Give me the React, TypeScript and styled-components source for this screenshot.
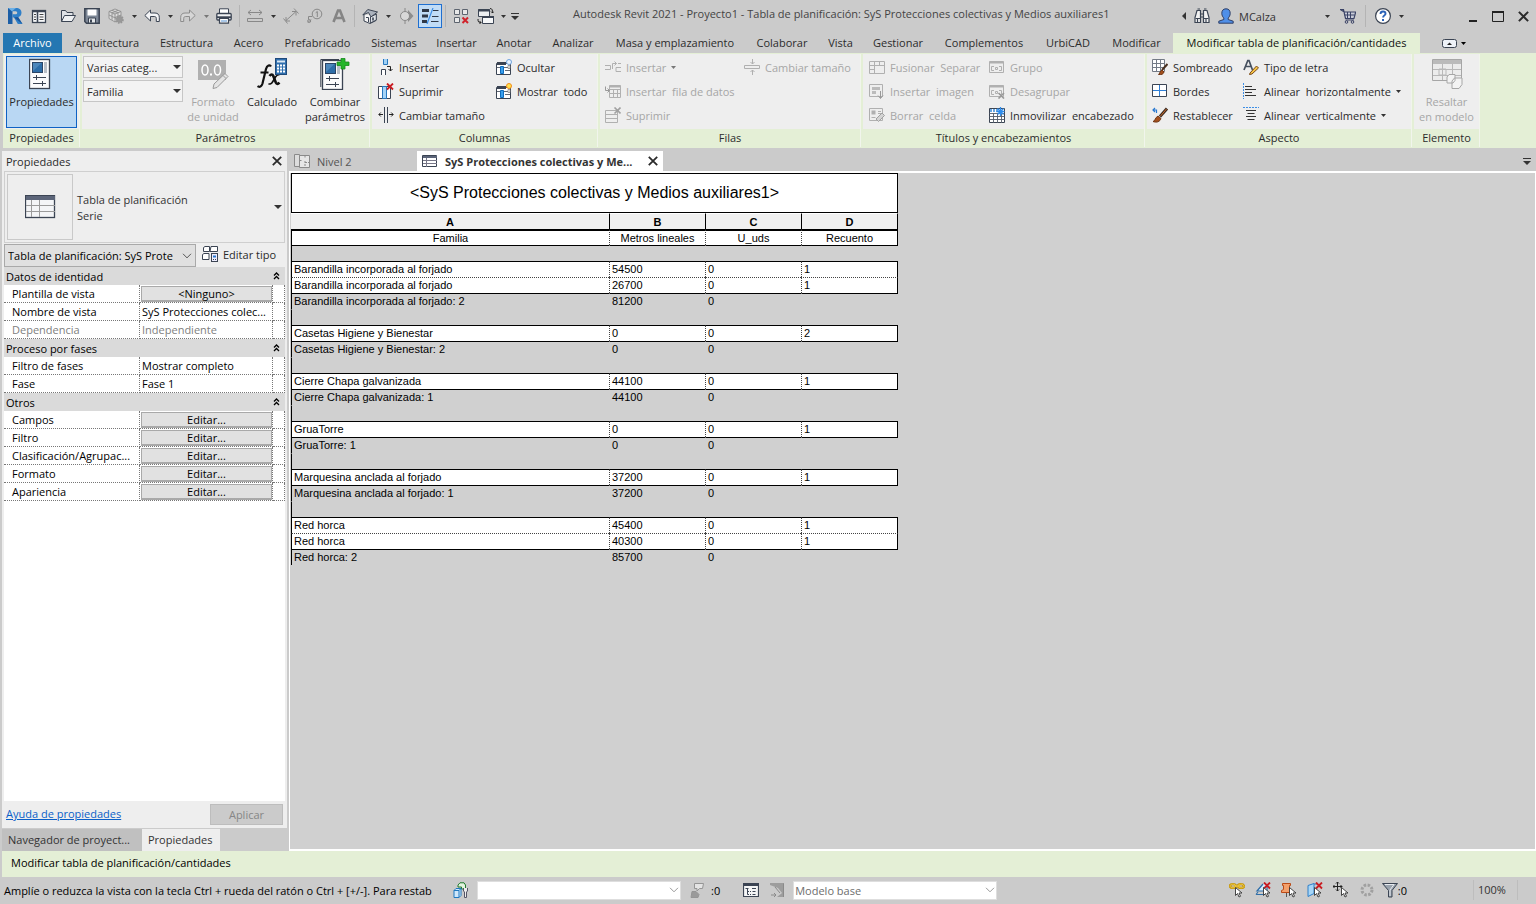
import React from 'react';
import styled, { createGlobalStyle, css } from 'styled-components';

const UI = '"Open Sans", "Noto Sans", sans-serif';
const SHEET = '"Liberation Sans", Arial, sans-serif';
const C = {
  chrome: '#cbcbcb',
  panel: '#eeeeee',
  green: '#e4efd6',
  text: '#2b2b2b',
  off: '#a6a6a6',
  ink: '#3b4453',
  blue: '#2577b2',
};

const GlobalStyle = createGlobalStyle`
  *, *::before, *::after { box-sizing: border-box; }
  body { margin: 0; background: ${C.chrome}; font-family: ${UI}; font-size: 11px; line-height: 15px; color: ${C.text}; }
  button, select, input { font: inherit; color: inherit; margin: 0; padding: 0; border: 0; background: none; border-radius: 0; }
  table { border-collapse: separate; border-spacing: 0; table-layout: fixed; }
  th { font-weight: inherit; text-align: inherit; }
  svg { display: block; flex: none; }
`;

/* ---------- icons ---------- */

type IconProps = { children: React.ReactNode; size?: number; w?: number; h?: number };
const Icon = ({ children, size = 16, w, h }: IconProps) => (
  <svg width={w ?? size} height={h ?? size} viewBox={`0 0 ${w ?? size} ${h ?? size}`} fill="none" stroke={C.ink} aria-hidden="true">
    {children}
  </svg>
);

const Caret = ({ color = '#333', w = 5 }: { color?: string; w?: number }) => (
  <svg width={w} height={w > 6 ? 4 : 3} viewBox={w > 6 ? '0 0 8 4' : '0 0 5 3'} aria-hidden="true">
    <path d={w > 6 ? 'M0 0h8L4 4z' : 'M0 0h5L2.5 3z'} fill={color} />
  </svg>
);

const Chevron = ({ color = '#555' }: { color?: string }) => (
  <Icon w={10} h={6}><path d="M1 .8 5 4.800 9 .8" stroke={color} /></Icon>
);

const RevitLogo = () => (
  <Icon w={16} h={18}>
    <path d="M1 1h4.500v16H1z" fill="#1c5ea6" stroke="none" />
    <path d="M4 1h5c3.500 0 5.500 1.800 5.500 4.700 0 2.300-1.300 3.900-3.500 4.500L15.500 17h-4.700L7 10.500H5.500V7.200h2.700c1.300 0 2-.5 2-1.500s-.7-1.500-2-1.500H4z" fill="#2f7fc8" stroke="none" />
    <path d="M1 1h8L5 4.300z" fill="#6fb1e6" stroke="none" />
    <path d="m7 10.500 4.200-.4L15.500 17z" fill="#1a559b" stroke="none" />
  </Icon>
);
const PropsSmall = () => (
  <Icon size={16}>
    <rect x="1.500" y="2.500" width="13" height="12" fill="#f7f8fa" strokeWidth="1.300" />
    <path d="M1 3.500h14M6.500 4v10" strokeWidth="1.600" />
    <path d="M3 6.500h2M3 9h2M3 11.500h2M8.500 6.500h4M8.500 9h4M8.500 11.500h4" stroke="#444" />
  </Icon>
);
const OpenIcon = () => (
  <Icon size={16}>
    <path d="M1.500 13.500v-11h4l1.500 2h6v3" fill="#dfe2e6" />
    <path d="m1.500 13.500 3-6h11l-3.500 6z" fill="#eef0f2" />
  </Icon>
);
const SaveIcon = () => (
  <Icon size={16}>
    <path d="M.8.8h14.400v14.400H2.500L.8 13.500z" fill="#7d8796" strokeWidth="1.500" />
    <path d="M3.500 1.500h9v6h-9z" fill="#fff" stroke="none" />
    <path d="M4.500 10h7v5h-7z" fill="#e4e7ea" stroke={C.ink} />
    <path d="M6 11.500h2v3H6z" fill={C.ink} stroke="none" />
  </Icon>
);
const CubeGear = () => (
  <Icon size={16}>
    <path d="M7 1 13 3.500v7L7 14 1 10.500v-7z M1 3.500 7 6l6-2.500M7 6v8M4 2.300l6 2.500v7M10 2.300 4 4.800v7M1 7l6 2.800L13 7" stroke="#909090" fill="#dcdcdc" strokeWidth=".9" />
    <circle cx="11.500" cy="11.500" r="3.300" fill="#999" stroke="#959595" strokeDasharray="1.500 1" strokeWidth="2" />
  </Icon>
);
const Undo = ({ color = C.ink, fill = '#f4f5f7', flip = false }: { color?: string; fill?: string; flip?: boolean }) => (
  <Icon size={16}>
    <path transform={flip ? 'translate(16 0) scale(-1 1)' : undefined} d="M.8 7.500 6.500 2v3h4.500c3 0 4.300 1.900 4.300 4.300v4.200h-3v-3c0-1.400-.7-2-2-2H6.500V13z" fill={fill} stroke={color} strokeLinejoin="round" />
  </Icon>
);
const Printer = () => (
  <Icon size={16}>
    <path d="M3.500 6V.8h9V6" fill="#fff" />
    <rect x=".8" y="5.500" width="14.400" height="6.500" rx="1" fill="#f3f4f5" strokeWidth="1.300" />
    <path d="M1 9.200h14" strokeWidth="1.800" />
    <path d="M3.500 10.500h9v4.700h-9z" fill="#fff" strokeWidth="1.200" />
    <path d="M5 13h6" stroke="#5590d0" />
  </Icon>
);
const Measure = () => (
  <Icon size={16}>
    <path d="M1 4.500h14M4 2 1 4.500 4 7M12 2l3 2.500L12 7M.5 10.500h15v3H.5z" stroke="#888" />
  </Icon>
);
const Dim = () => (
  <Icon size={16}><path d="M3 12.500 12.500 4M3 9v4h4M9 3.500h4v4M.5 10.500l4 5M11 .5l4.500 5" stroke="#8a8a8a" /></Icon>
);
const TagOne = () => (
  <Icon size={16}>
    <circle cx="10" cy="6" r="4.800" stroke="#888" />
    <path d="M8.700 4.800 10.300 3.500V9M5 8.500H1.500v3M1 14.500l3-3" stroke="#888" /><circle cx="2.200" cy="13" r="1.500" stroke="#888" />
  </Icon>
);
const LetterIcon = () => (
  <Icon size={14}><path d="M1.500 13 6 1.500h2L12.500 13M3.500 9h7" stroke="#858585" strokeWidth="2.600" /></Icon>
);
const House = () => (
  <Icon size={16}>
    <path d="M2 7v6l6 2.500 6-3V6" fill="#f5f5f5" /><path d="m.8 7 5-5.500L15.500 4 9 9 6.500 4.500z" fill="#aab2bd" strokeLinejoin="round" />
    <path d="m8.500 9-.2 6 6-3V6z" fill="#dde1e6" /><path d="M4 9.500h2.500V14" /><path d="M11 9.500v3" strokeWidth="1.600" />
  </Icon>
);
const Section = () => (
  <Icon size={16}>
    <path d="m10 2 5.500 6L10 14z" fill="#8d8d8d" stroke="none" /><circle cx="7" cy="8" r="4.500" fill="#d8d8d8" stroke="#888" /><path d="M7 0v3M7 13v3" stroke="#888" />
  </Icon>
);
const ThinLines = () => (
  <Icon w={18} h={16}>
    <path d="M1 2.500h7M1 8h6M1 13.500h5" stroke="#303846" strokeWidth="3" />
    <path d="M12 2.500h5.500M11 8.500h6.500M10 13.500h7.500" stroke="#303846" /><path d="M12 0 6 16" stroke="#3c8ee6" strokeWidth="1.200" />
  </Icon>
);
const CloseHidden = () => (
  <Icon size={16}>
    <path d="M1.500 1.500h5v5h-5zM1.500 9.500h5v5h-5zM9.500 1.500h5v5h-5z" fill="#e8e8e8" stroke="#5d646f" />
    <path d="m9.500 9.500 5.500 5.500m0-5.500L9.500 15" stroke="#d0232b" strokeWidth="2" />
  </Icon>
);
const SwitchWin = () => (
  <Icon size={17}>
    <path d="M1.500 1.500h11v7h-11z" fill="#eceef0" /><path d="M1 2.500h12" strokeWidth="2" />
    <path d="M5.500 8.500h11v7h-11z" fill="#f6f7f8" /><path d="M5 9h12" strokeWidth="2" />
    <path d="M13 .5c2.500 0 2.500 2 2.500 4.500m-1.500-1.500L15.500 5 17 3.500M1 11c0 3 .5 3.500 3 3.500M2.500 13 4 14.500 2.500 16" stroke="#222" />
  </Icon>
);
const Customize = () => (
  <Icon w={8} h={7}><path d="M0 .5h8" stroke="#333" /><path d="M0 3h8L4 7z" fill="#333" stroke="none" /></Icon>
);
const Binoculars = () => (
  <Icon size={16}>
    <path d="M3 2.500h3.500V14.500h-5.500v-5zM9.500 2.500H13l2 7v5H9.500z" fill="#f2f2f2" strokeWidth="1.200" />
    <path d="M3.500 1h2.500M10 1h2.500M6.500 6h3M6.500 9h3M1.500 10.500h5M9.500 10.500h5M3.500 11v3M12 11v3" strokeWidth="1.200" />
  </Icon>
);
const UserIcon = () => (
  <Icon size={16}>
    <path d="M8 .8c3 0 4.200 2 4.200 4.500 0 2.300-1 3.700-2 4.700v1.500l5 1.700v2H.8v-2l5-1.700V10c-1-1-2-2.400-2-4.700C3.800 2.800 5 .8 8 .8z" fill="#4f8fe8" stroke="#2f3f66" />
  </Icon>
);
const Cart = () => (
  <Icon size={16}>
    <path d="M.5 1.500h3l2 9h8.500l1.700-6.500H4.200z" fill="#c8ccd8" stroke="#3b4366" strokeWidth="1.200" /><path d="M4.500 7h10M7.500 4v6M10.500 4v6M5.500 12h8.500" stroke="#3b4366" />
    <circle cx="6.500" cy="14" r="1.300" stroke="#3b4366" /><circle cx="12.500" cy="14" r="1.300" stroke="#3b4366" />
  </Icon>
);
const Help = () => (
  <Icon size={16}>
    <circle cx="8" cy="8" r="7.400" fill="#fff" strokeWidth="1.200" /><path d="M5.500 6c0-1.600 1-2.500 2.500-2.500s2.500.9 2.500 2.200c0 1.700-2.400 1.700-2.400 3.800" stroke="#2a62b8" strokeWidth="1.900" /><path d="M7 11h2v2H7z" fill="#2a62b8" stroke="none" />
  </Icon>
);

const PropsBody = ({ x = 0, y = 0 }: { x?: number; y?: number }) => (
  <g transform={`translate(${x} ${y})`}>
    <rect x=".5" y=".5" width="20" height="29" fill="#fbfbfc" strokeWidth="1.300" />
    <rect x="3.500" y="3.500" width="10" height="10" fill="#2d6da8" stroke="#2b4566" /><path d="M4 12 12.500 4H4z" fill="#4d87bb" stroke="none" />
    <path d="M15 3h3v11h-3z" fill="#b9bfc7" stroke="none" /><path d="M4 18.500h13M4 24.500h13M7.500 16v5M13.500 22v5" />
  </g>
);
const PropsBig = () => <Icon w={26} h={32}><PropsBody x={0} y={1} /></Icon>;
const Combine = () => (
  <Icon w={30} h={32}>
    <path d="M.8 29V1.500H19" fill="none" /><g><PropsBody x={2} y={2} /></g>
    <path d="M21 .500h4v3.500h4v3.500h-4V11h-4V7.500h-4V4h4z" fill="#25b52b" stroke="#168a1c" strokeWidth=".8" />
  </Icon>
);
const UnitFormat = () => (
  <Icon w={32} h={32}>
    <path d="M1 2h28v20H1z" fill="#b0b0b0" stroke="none" />
    <ellipse cx="8" cy="12" rx="3" ry="5" stroke="#fff" strokeWidth="1.500" /><path d="M13 15.500h2v2h-2z" fill="#fff" stroke="none" /><ellipse cx="20.500" cy="12" rx="3" ry="5" stroke="#fff" strokeWidth="1.500" />
    <path d="M17 26 28 15.500l3 3L20 29.500l-4 1z" fill="#e4e4e4" stroke="#9a9a9a" /><path d="m26 17.500 3 3" stroke="#9a9a9a" />
  </Icon>
);
const FormulaIcon = () => (
  <Icon w={32} h={32}>
    <path d="M15 8.500c-1-2-4-1.500-5 2.500L6.500 25.500c-.8 3-3 4-5 2.700M4.500 14.500h8" stroke="#111" strokeWidth="2.200" />
    <path d="M13.500 18c1.500-2 3-2 3.800 0l2.500 6.500c.8 1.800 2.200 1.700 3.700.2" stroke="#111" strokeWidth="2.600" />
    <path d="M23.500 17c-1.500-.7-3 .5-4 2l-3 5c-1 1.800-2.500 2.500-4 1.600" stroke="#111" strokeWidth="1.600" />
    <rect x="19.500" y=".5" width="11" height="16" fill="#2f6fae" stroke="#1f4a7a" />
    <path d="M21 2.500h8v2h-8z" fill="#dbe9f5" stroke="none" />
    <path d="M21 7.500h8M21 10.500h8M21 13.500h8" stroke="#fff" strokeWidth="2" strokeDasharray="2 1" />
  </Icon>
);
const Highlight = () => (
  <Icon w={32} h={32}>
    <path d="M1.500 1.500h29v21h-29z" fill="#ececec" stroke="#a6a6a6" /><path d="M2 2h28v4H2z" fill="#bbb" stroke="none" />
    <path d="M2 11.500h28M2 17.500h28M11.500 6v16M21.500 6v16M8 11h7v6H8z" stroke="#b8b8b8" />
    <path d="m16 19 2-2.500h6v6L22 25h-6zM21 23l2.500-3H31v6.500L28 30.500h-7z" fill="#f3f3f3" stroke="#a6a6a6" />
  </Icon>
);

const InsertCol = () => (
  <Icon size={16}>
    <path d="M5.500 0v5.500h4V0" fill="#9fd0f5" stroke="#2878be" /><path d="M3.500 16v-5.500h4V16" fill="#fff" /><path d="M9 7.500h3.500V12M10.500 10 12.500 12 14.500 10" stroke="#222" />
  </Icon>
);
const RedX = ({ x = 9, y = 0 }: { x?: number; y?: number }) => <path d={`M${x} ${y + .5}l6 6m0-6l-6 6`} stroke="#c91c22" strokeWidth="1.800" />;
const DeleteCol = () => (
  <Icon size={16}>
    <path d="M.5 3.500h12v12H.5z" fill="#fff" /><path d="M4.500 3.500h4v12h-4z" fill="#a5d4f7" stroke="#2878be" /><RedX />
  </Icon>
);
const ResizeCol = () => (
  <Icon size={16}><path d="M6.500 0v16M9.500 0v16" /><path d="M1 7.500h4M11 7.500h4M2.800 5.500.8 7.500l2 2M13.200 5.500l2 2-2 2" stroke="#222" /></Icon>
);
const HideCol = ({ on = false }: { on?: boolean }) => (
  <Icon size={16}>
    <path d="M.5 4.500h14v11H.5z" fill="#fff" /><path d="M1 4.500h9" strokeWidth="3" /><path d="M1 8.500h14M9 11.500h6" strokeWidth=".8" />
    <path d="M4.500 7.500h3v7h-3z" fill="#3aa0ee" stroke="#0f6cbd" />
    <path d="M12 6.500h2v3h-2z" fill="#fff" stroke="#888" strokeWidth=".8" /><circle cx="13" cy="3" r="2.500" fill={on ? '#ffe34d' : '#eaf4ff'} stroke={on ? '#f08a1d' : '#6fa3dd'} />
  </Icon>
);
const G = '#b0b0b0';
const InsertRow = () => (
  <Icon size={16}><path d="M0 6.500h5.500v4H0M16 8.500h-5v4h5M16 4.500h-3M7.500 10V4.500h4M9.500 2.500l2 2-2 2" stroke={G} /></Icon>
);
const InsertData = () => (
  <Icon size={16}><path d="M4.500 2.500h11v12h-11zM4.500 6.500h11M4.500 10.500h11M8.500 6v8M12.500 6v8" stroke={G} /><path d="M4.500 3.500h11" stroke={G} strokeWidth="2" /><path d="M.5 3.500v4h4M2.500 5.500l2 2-2 2" stroke="#999" /></Icon>
);
const DeleteRow = () => (
  <Icon size={16}><path d="M.5 3.500h12v12H.5zM.5 7.500h12M.5 11.500h12" stroke={G} /><path d="m9.500.5 6 6m0-6-6 6" stroke="#a0a0a0" strokeWidth="1.600" /></Icon>
);
const ResizeRow = () => (
  <Icon size={16}><path d="M.5 6.500h15v3H.500z M8.500 0v5M8.500 11v5M6.500 3 8.500 5l2-2M6.500 13l2-2 2 2" stroke={G} /></Icon>
);
const Merge = () => (
  <Icon size={16}><path d="M.5 2.500h15v12H.5zM.5 6.500h15M5.500 2.500v12M10.500 2.500v4M.5 10.500h5" stroke={G} /></Icon>
);
const InsertImg = () => (
  <Icon size={16}><path d="M.5 1.500h13v12H.5z" stroke={G} /><path d="M3 4h8v3H3zM3 8h4v3H3z" fill="#bbb" stroke="none" /><path d="M11.500 8v7M9 12.500l2.500 3 2.500-3" stroke="#999" /></Icon>
);
const ClearCell = () => (
  <Icon size={16}><path d="M.5 1.500h13v12H.5z" stroke={G} /><path d="M2.500 3.500h4v4h-4z" fill={G} stroke="none" /><path d="M9 4.500h3M9 6.500h3M2.500 10.500h4" stroke={G} /><path d="m7 12 6-6 2.500 2.500-6 6z" fill="#d4d4d4" stroke="#a0a0a0" /></Icon>
);
const GroupIcon = ({ x = false }: { x?: boolean }) => (
  <Icon size={16}><path d="M.5 2.500h14v11H.5z" stroke={G} /><path d="M.5 3.500h14" stroke={G} strokeWidth="2" /><path d="M5 7.500H2.500v4H5M10 7.500h2.500v4H10M6.500 8.500h2v2h-2z" stroke={G} />{x && <path d="m9.500 10 5.500 5.500m0-5.500-5.500 5.500" stroke="#999" strokeWidth="1.600" />}</Icon>
);
const Freeze = () => (
  <Icon size={16}>
    <path d="M.5 1.500h15v14H.5z" fill="#fff" /><path d="M1 3.500h8" stroke="#6ba8e2" strokeWidth="3" strokeDasharray="2 1" /><path d="M.5 6.500h15M.5 9.500h15M.5 12.500h15M4.500 6v10M8.500 6v10M12.500 6v10" stroke="#555e6b" strokeWidth=".9" />
    <path d="M11.500 0v9M7.500 4.500h8M8.500 1.500l6 6m0-6-6 6" stroke="#2f8ceb" strokeWidth="1.300" />
  </Icon>
);
const Brush = () => (
  <g><path d="M10 11 15.500 5" stroke="#4a3020" strokeWidth="2" /><path d="M6.500 15.500c1 0 1-3 3.500-4.500l2 2c-.5 2-2.500 3-5.500 2.500z" fill="#a4501c" stroke="#6d3413" /></g>
);
const Shading = () => (
  <Icon size={16}><path d="M.5.5h12v12H.5zM.5 4.500h12M.5 8.500h12M4.500.5v12M8.500.5v12" fill="#fff" stroke="#747b86" /><Brush /></Icon>
);
const Borders = () => (
  <Icon size={16}><path d="M.5 1.500h14v12H.5z" fill="#fff" /><path d="M7.500 2v11M1 7.500h13" stroke="#2f7fd6" /></Icon>
);
const Reset = () => (
  <Icon size={16}>
    <path d="M8 9.500 15 1.500" stroke="#3b2a20" strokeWidth="3" /><path d="M8.500 9 14.500 2" stroke="#c96a2b" />
    <path d="M1 14.500c2 0 2-4 5-5.500l3 2.500c-1 3-4 4.500-8 3z" fill="#a4501c" stroke="#6d3413" /><path d="M1 3h3.500v3M3 1 1 3l2 2" stroke="#2878d0" strokeWidth="1.200" />
  </Icon>
);
const FontIcon = () => (
  <Icon size={16}><path d="M1 11 4.800 1.500H6L9.500 11M2.500 7.500h5.500" stroke="#46505f" strokeWidth="1.700" /><path d="m7 14 6.500-7 2 2L9 15l-2.500.5z" fill="#f6c445" stroke="#7a4a1a" /></Icon>
);
const AlignH = () => (
  <Icon size={16}><path d="M.5 0v16" stroke="#3c8ee6" strokeDasharray="2 1" /><path d="M2 3.500h7M2 6.500h11M2 9.500h7M2 12.500h11" stroke="#333" /></Icon>
);
const AlignV = () => (
  <Icon size={16}><path d="M0 .5h16" stroke="#3c8ee6" strokeDasharray="2 1" /><path d="M3 3.500h10M4.500 6.500h7M3 9.500h10M4.500 12.500h7" stroke="#333" /></Icon>
);
const TableBig = () => (
  <Icon w={31} h={24}><rect x=".5" y=".5" width="29" height="22" fill="#f4f5f7" strokeWidth="1.300" /><path d="M1 3h29" stroke="#5c6579" strokeWidth="4" /><path d="M1 10.500h29M1 16.500h29M6.500 5v17M14.500 5v17" stroke="#9b9b9b" /></Icon>
);
const TableTab = () => (
  <Icon w={16} h={13}><path d="M.5.5h14v11H.5z" fill="#fff" /><path d="M1 2h14" strokeWidth="2" stroke="#5c6579" /><path d="M1 5.500h14M1 8.500h14M4.500 3v9" stroke="#778" /></Icon>
);
const PlanTab = () => (
  <Icon w={16} h={14}><path d="M5.500 2V.500H.5v12h5" fill="#ddd" stroke="#8a8a8a" /><path d="M5.500 1.500h10v12h-10z" fill="#e6e6e6" stroke="#8a8a8a" /><path d="M5.500 6.500h3M11 1.500v3M11 7v6.500M11 8.500h4" stroke="#8a8a8a" strokeDasharray="2 1" /></Icon>
);
const EditType = () => (
  <Icon size={16}><path d="M1.500 1.500 3 .5h4.500v5h-6zM9 .5h6.500v5H8zM.5 8.500 2 7.500h5v6H.500z" fill="#fff" /><rect x="9.500" y="7.500" width="6" height="8" fill="#eef" /><path d="M11 9.500h3v2h-3z" fill="#2878d0" stroke="none" /><path d="M11 13.500h3" strokeDasharray="1 1" /></Icon>
);
const DoubleUp = () => (
  <Icon w={7} h={8}><path d="m1 3.500 2.500-2.500L6 3.500M1 7l2.500-2.500L6 7" stroke="#000" strokeWidth="1.300" /></Icon>
);
const Cross = ({ s = 10 }: { s?: number }) => (
  <svg width={s} height={s} viewBox="0 0 10 10" stroke="#2b2b2b" strokeWidth="1.800" aria-hidden="true"><path d="m.8.8 8.400 8.400m0-8.400L.8 9.200" /></svg>
);
const Pointer = ({ x = 7, y = 5 }: { x?: number; y?: number }) => <path transform={`translate(${x} ${y})`} d="M.5.5v8l2-2 1.500 3.500 1.500-.7L4 6h3z" fill="#fff" stroke="#333" strokeWidth=".9" />;
const Worksets = () => (
  <Icon size={16}><path d="M5 3 7 .8h4L12.500 3v4h-4v-2H5z" fill="#e2f3df" stroke="#1f7a2d" /><path d="M1 8.500 3 6.500h5v7L6 15.500H1z" fill="#cfe8fb" stroke="#1f78c0" /><path d="M1 8.500h5v7M6 8.500l2-2" stroke="#1f78c0" /><path d="M10.500 6v3l1 1v5.500h2V10l1-1V6" fill="#eee" stroke="#556" /></Icon>
);
const Requests = () => (
  <Icon size={16}><path d="M4.500 1.500h9l-1 5h-3L7 9V6.500H4.500z" fill="#e4e4e4" stroke="#959595" /><path d="M2 9.500h4l3 3-1 3H1z" fill="#9a9a9a" stroke="#959595" /></Icon>
);
const OptionsIcon = () => (
  <Icon size={16}><path d="M.5 1.500h15v13H.5z" fill="#f4f5f6" strokeWidth="1.200" /><path d="M1 3h14" strokeWidth="2" /><path d="M2.500 6.500h3M9 6.500h4M7 9.500h1M9.500 9.500h3M7 12.500h1M9.500 12.500h3M4.500 7v5.500h1.500M4.500 9.500H6" /></Icon>
);
const AddSet = () => (
  <Icon size={16}><path d="M1 1h14v14H8l5-4-4-5-8-3z" fill="#9d9d9d" stroke="none" /><path d="M2 13h5M5 11l2 2-2 2M14.500 15V1.500M6 5l5 6" stroke="#8a8a8a" /></Icon>
);
const SelLinks = () => <Icon size={16}><path d="M1 4C1 1.500 6.500 1.500 7 4s-6 2.500-6 0zM9 4c0-2.500 5.500-2.500 6 0s-6 2.500-6 0z" stroke="#c08f00" strokeWidth="2.400" /><path d="M1 4C1 1.500 6.500 1.500 7 4s-6 2.500-6 0zM9 4c0-2.500 5.500-2.500 6 0s-6 2.500-6 0zM5 4h6" stroke="#f3cd46" /><Pointer x={6} /></Icon>;
const SelUnder = () => <Icon size={16}><path d="M8 2 2 9h10V2" fill="#d8eafa" stroke="#2f6ea8" strokeWidth="1.200" /><path d="M1 12.500h9M3 10l-2 2.500" stroke="#2f6ea8" strokeWidth="1.200" /><RedX /><Pointer x={8} /></Icon>;
const SelPinned = () => <Icon size={16}><path d="M1.500 1.500h8v2h-1v4l2 1v2h-10v-2l2-1v-4h-1z" fill="#f3a06c" stroke="#bb4a17" /><path d="M5.500 11v4" stroke="#555" /><Pointer x={8} /></Icon>;
const SelFace = () => <Icon size={16}><path d="m1 3.500 6-2v10l-6 3z" fill="#a7d6f7" stroke="#2f7fc8" /><path d="M7 2h3" stroke="#2f7fc8" /><RedX /><Pointer x={7} /></Icon>;
const DragSel = () => <Icon size={16}><path d="M4.500 0v9M0 4.500h9M3 1.500 4.500 0 6 1.500M3 7.500 4.500 9 6 7.500M1.500 3 0 4.500 1.500 6M7.500 3 9 4.500 7.500 6" stroke="#222" /><Pointer x={8} /></Icon>;
const Spinner = () => <Icon size={14}><circle cx="7" cy="7" r="5" stroke="#a0a0a0" strokeWidth="3" strokeDasharray="2.500 1.430" /></Icon>;
const Funnel = () => <Icon size={16}><path d="M.5 1.500h15l-5.500 7v6.500H6.500V8.500z" fill="#9aa3ae" /><path d="M3 2.500h9L8 8v6" stroke="#e8ebef" /></Icon>;

/* ---------- shell ---------- */

const Window = styled.div`display: flex; flex-direction: column; min-height: 100vh; overflow: hidden;`;
const row = css`display: flex; align-items: center;`;

const TitleBar = styled.header`${row} height: 32px; padding-left: 3px;`;
const Tool = styled.button<{ $on?: boolean }>`
  ${row} justify-content: center; flex: none; width: 24px; height: 24px;
  ${p => p.$on && 'background: #c1dcf6; border: 1px solid #1f6fd0;'}
`;
const Drop = styled.button`${row} justify-content: center; flex: none; width: 12px; height: 24px;`;
const Divider = styled.span`flex: none; width: 1px; height: 22px; margin: 0 3px; background: #b4b4b4;`;
const Gap = styled.span<{ $w: number }>`flex: none; width: ${p => p.$w}px;`;
const Spring = styled.span`flex: 1;`;
const Title = styled.h1`flex: 1; margin: 0; padding: 0 0 4px 52px; font-size: 11px; font-weight: 400; line-height: 16px; white-space: nowrap; color: #444;`;
const Account = styled.button`${row} gap: 5px; flex: none; width: 104px; height: 24px; padding-left: 4px; color: #333;`;

const TabBar = styled.nav`${row} align-items: stretch; height: 21px; padding: 1px 0 0 3px;`;
const Tab = styled.button<{ $w: number; $kind?: 'file' | 'active' }>`
  flex: none; min-width: ${p => p.$w}px; padding: 0 4px 2px; white-space: nowrap; text-align: center;
  ${p => p.$kind === 'file' && `background: ${C.blue}; color: #fff; margin-right: 2px;`}
  ${p => p.$kind === 'active' && `background: ${C.green}; color: #111; margin-left: 1px;`}
`;
const Collapse = styled.button`${row} gap: 4px; margin-left: 22px;`;

const Ribbon = styled.section`display: flex; height: 95px; margin-left: 3px; padding: 1px 0 1px 1px; gap: 2px; background: ${C.green};`;
const PanelBox = styled.section<{ $w: number }>`
  display: flex; flex-direction: column; flex: none; width: ${p => p.$w}px; border-right: 1px solid #f1f5ec; background: ${C.panel};
`;
const PanelBody = styled.div<{ $cols: string; $pad: number }>`
  display: grid; flex: 1; grid-template-columns: ${p => p.$cols}; padding: 1px 0 0 ${p => p.$pad}px;
`;
const PanelTitle = styled.h2`margin: 0; height: 18px; font-size: 11px; font-weight: 400; line-height: 18px; text-align: center; background: ${C.green};`;
const Stack = styled.div`display: grid; grid-auto-rows: 24px; align-content: start; justify-items: start;`;
const Cmd = styled.button`
  ${row} gap: 5px; height: 24px; white-space: pre;
  &:disabled { color: ${C.off}; }
`;
const BigCmd = styled.button<{ $on?: boolean }>`
  display: flex; flex-direction: column; align-items: center; gap: 4px; height: 72px; margin-top: 1px; padding-top: 2px; line-height: 15px; white-space: pre-line;
  ${p => p.$on && 'background: #b9d7f3; border: 1px solid #0f62c4; padding-top: 1px;'}
  &:disabled { color: ${C.off}; }
`;

const SelectBox = styled.div<{ $arrow: number }>`
  position: relative; display: flex;
  > svg { position: absolute; right: ${p => p.$arrow}px; top: 0; bottom: 0; margin: auto 0; pointer-events: none; }
`;
const Select = styled.select<{ $look?: 'ribbon' | 'type' | 'status' }>`
  appearance: none; width: 100%; height: 22px; padding: 0 16px 0 3px; border: 1px solid #c6c6c6; background: #f3f3f3; opacity: 1;
  ${p => p.$look === 'type' && 'border-color: #a9a9a9; background: #e0e0e0; color: #000; height: 23px;'}
  ${p => p.$look === 'status' && 'border-color: #dedede; background: #fff; color: #6d6d6d; height: 19px; padding-left: 1px;'}
`;
const ParamSelects = styled.div`display: grid; grid-auto-rows: 22px; gap: 2px; align-content: start; padding-top: 1px;`;

type PanelProps = { title: string; w: number; cols?: string; pad?: number; children: React.ReactNode };
const Panel = ({ title, w, cols = '1fr', pad = 0, children }: PanelProps) => (
  <PanelBox $w={w} aria-label={title}>
    <PanelBody $cols={cols} $pad={pad}>{children}</PanelBody>
    <PanelTitle>{title}</PanelTitle>
  </PanelBox>
);

/* ---------- palette ---------- */

const Main = styled.main`display: flex; flex: 1; margin-top: 3px;`;
const Side = styled.aside`display: flex; flex-direction: column; flex: none; width: 287px; padding-left: 2px;`;
const Palette = styled.section`display: flex; flex-direction: column; flex: 1; padding: 0 2px; background: ${C.panel};`;
const PaletteHead = styled.div`${row} justify-content: space-between; height: 20px; padding: 0 3px 0 2px;`;
const PaletteTitle = styled.h2`margin: 0; font-size: 11px; font-weight: 400;`;
const TypeCard = styled.button`${row} height: 72px; padding: 0 2px; border: 1px solid #cfcfcf; text-align: left; color: #333;`;
const Preview = styled.span`${row} justify-content: center; width: 66px; height: 66px; border: 1px solid #c9c9c9;`;
const TypeName = styled.span`flex: 1; padding: 2px 0 0 4px; line-height: 16px; white-space: pre-line;`;
const FilterRow = styled.div`display: grid; grid-template-columns: 192px 1fr; gap: 6px; height: 24px; padding-top: 1px;`;
const EditBtn = styled.button`${row} gap: 5px; height: 20px; white-space: nowrap;`;
const PropsArea = styled.div`flex: 1; background: #fff;`;
const PropsTable = styled.table`width: 100%; color: #000;`;
const GroupRow = styled.tr`
  height: 18px; background: #dadada;
  th { padding: 0 0 0 2px; height: 18px; line-height: 17px; }
  td { padding: 0; }
`;
const PropRow = styled.tr<{ $off?: boolean }>`
  height: 18px; ${p => p.$off && 'color: #808080;'}
  th, td { height: 18px; padding: 0; line-height: 17px; border-bottom: 1px dotted #777; border-right: 1px dotted #777; white-space: nowrap; overflow: hidden; }
  th { padding-left: 8px; }
  td:nth-child(2) { padding-left: 2px; }
`;
const CellButton = styled.button`display: block; width: 131px; height: 16px; margin-left: -1px; line-height: 13px; border: 1px solid #a9a9a9; border-bottom-width: 2px; background: #e1e1e1;`;
const PaletteFoot = styled.div`${row} justify-content: space-between; height: 27px; padding: 0 2px;`;
const Link = styled.a`padding-bottom: 2px; color: #0a5fc8; text-decoration: underline;`;
const Apply = styled.button`width: 73px; height: 21px; border: 1px solid #bdbdbd; background: #cbcbcb; color: #868686;`;
const SideTabs = styled.div`display: flex; height: 23px; padding-top: 1px;`;
const SideTab = styled.button<{ $w: number; $on?: boolean }>`min-width: ${p => p.$w}px; padding: 0 6px 2px; text-align: left; white-space: nowrap; color: #333; background: ${p => (p.$on ? C.panel : '#c0c0c0')};`;

/* ---------- document ---------- */

const Doc = styled.section`display: flex; flex-direction: column; flex: 1; min-width: 0; margin-left: 2px;`;
const DocTabs = styled.div`${row} align-items: stretch; height: 20px;`;
const DocTab = styled.button<{ $on?: boolean }>`
  ${row} gap: 7px; padding-left: 5px; white-space: nowrap; color: #555; width: ${p => (p.$on ? 246 : 128)}px;
  ${p => p.$on && 'background: #fff; color: #333; font-weight: 700;'}
  > svg:last-child:not(:first-child) { margin-left: auto; margin-right: 5px; }
`;
const DocMenu = styled.button`${row} margin-left: auto; padding-right: 5px;`;
const Canvas = styled.div`flex: 1; border: 1px solid #fff; border-top-width: 2px; border-bottom-width: 2px; background: #d0d0d0; padding-left: 1px;`;

const Sheet = styled.table`
  width: 607px; font-family: ${SHEET}; font-size: 11px; line-height: 14px; color: #000;
  th, td { padding: 0 2px; white-space: nowrap; }
`;
const SheetTitle = styled.th`height: 40px; border: 1px solid #000; background: #fff; font-size: 16px; line-height: 18px; text-align: center;`;
const LetterRow = styled.tr`
  th { height: 16px; background: #f0f0f0; border-top: 1px solid #fff; border-left: 1px solid #000; font-weight: 700; text-align: center; }
  th:first-child { border-left: 0; }
  th:last-child { border-right: 1px solid #000; }
`;
const HeadRow = styled.tr`
  th { height: 16px; background: #fff; border-top: 2px solid #000; border-left: 1px dotted #444; text-align: center; }
  th:first-child { border-left: 1px solid #000; }
  th:last-child { border-right: 1px solid #000; }
`;
type Kind = 'first' | 'next' | 'total' | 'blank' | 'edge';
const TOP: Record<Kind, string> = {
  first: '1px solid #000', next: '1px dotted #444', total: '1px solid #000', blank: '1px solid transparent', edge: '1px solid #000',
};
const isItem = (k: Kind) => k === 'first' || k === 'next';
const SheetRow = styled.tr<{ $kind: Kind }>`
  td {
    height: 16px; line-height: 15px; vertical-align: top;
    border-top: ${p => TOP[p.$kind]};
    border-left: 1px ${p => (isItem(p.$kind) ? 'dotted #444' : 'solid transparent')};
    background: ${p => (isItem(p.$kind) ? '#fff' : '#d0d0d0')};
  }
  td:first-child { border-left: 1px solid #000; }
  td:last-child { ${p => isItem(p.$kind) && 'border-right: 1px solid #000;'} }
`;

/* ---------- bottom bars ---------- */

const OptionsBar = styled.div`height: 26px; margin-left: 2px; padding-left: 9px; line-height: 24px; color: #000; background: ${C.green};`;
const StatusBar = styled.footer`${row} height: 27px; padding-bottom: 1px; color: #000;`;
const StatusText = styled.div`flex: none; width: 446px; padding-left: 4px; overflow: hidden; white-space: nowrap;`;
const StatusTool = styled.button`${row} justify-content: center; flex: none; width: 26px; height: 24px;`;
const FilterCount = styled.button`${row} flex: none; margin-left: 2px;`;
const StatusSelect = styled(SelectBox)`flex: none; width: 204px;`;
const Zoom = styled.output`width: 45px; padding-left: 4px; height: 20px; line-height: 20px; border: 1px solid #bdbdbd; border-width: 0 1px; margin-left: 66px; color: #333;`;

const TABS: [string, number][] = [
  ['Arquitectura', 86], ['Estructura', 73], ['Acero', 51], ['Prefabricado', 87], ['Sistemas', 66], ['Insertar', 59], ['Anotar', 56], ['Analizar', 62],
  ['Masa y emplazamiento', 142], ['Colaborar', 72], ['Vista', 45], ['Gestionar', 70], ['Complementos', 102], ['UrbiCAD', 66], ['Modificar', 71],
];

type Prop = { name: string; value: string; kind?: 'button' | 'off' };
const GROUPS: { title: string; rows: Prop[] }[] = [
  { title: 'Datos de identidad', rows: [
    { name: 'Plantilla de vista', value: '<Ninguno>', kind: 'button' },
    { name: 'Nombre de vista', value: 'SyS Protecciones colec...' },
    { name: 'Dependencia', value: 'Independiente', kind: 'off' },
  ] },
  { title: 'Proceso por fases', rows: [
    { name: 'Filtro de fases', value: 'Mostrar completo' },
    { name: 'Fase', value: 'Fase 1' },
  ] },
  { title: 'Otros', rows: ['Campos', 'Filtro', 'Clasificación/Agrupac...', 'Formato', 'Apariencia'].map(name => ({ name, value: 'Editar...', kind: 'button' as const })) },
];

const SCHEDULE: { family: string; items: [string, string, string][]; count: number; total: string }[] = [
  { family: 'Barandilla incorporada al forjado', items: [['54500', '0', '1'], ['26700', '0', '1']], count: 2, total: '81200' },
  { family: 'Casetas Higiene y Bienestar', items: [['0', '0', '2']], count: 2, total: '0' },
  { family: 'Cierre Chapa galvanizada', items: [['44100', '0', '1']], count: 1, total: '44100' },
  { family: 'GruaTorre', items: [['0', '0', '1']], count: 1, total: '0' },
  { family: 'Marquesina anclada al forjado', items: [['37200', '0', '1']], count: 1, total: '37200' },
  { family: 'Red horca', items: [['45400', '0', '1'], ['40300', '0', '1']], count: 2, total: '85700' },
];

const DropArrow = ({ label }: { label: string }) => <Drop aria-label={label}><Caret /></Drop>;

const AppTitle = () => (
  <TitleBar>
    <Tool aria-label="Revit"><RevitLogo /></Tool>
    <Tool aria-label="Inicio"><PropsSmall /></Tool>
    <Gap $w={5} />
    <Tool aria-label="Abrir"><OpenIcon /></Tool>
    <Tool aria-label="Guardar"><SaveIcon /></Tool>
    <Tool aria-label="Sincronizar"><CubeGear /></Tool>
    <DropArrow label="Opciones de sincronización" />
    <Tool aria-label="Deshacer"><Undo /></Tool>
    <DropArrow label="Historial de deshacer" />
    <Tool aria-label="Rehacer"><Undo color="#8c8c8c" fill="#d6d6d6" flip /></Tool>
    <Drop aria-label="Historial de rehacer"><Caret color="#777" /></Drop>
    <Tool aria-label="Imprimir"><Printer /></Tool>
    <Divider />
    <Tool aria-label="Medir"><Measure /></Tool>
    <DropArrow label="Opciones de medida" />
    <Tool aria-label="Cota alineada"><Dim /></Tool>
    <Tool aria-label="Etiqueta"><TagOne /></Tool>
    <Tool aria-label="Texto"><LetterIcon /></Tool>
    <Divider />
    <Tool aria-label="Vista 3D"><House /></Tool>
    <DropArrow label="Opciones de vista 3D" />
    <Tool aria-label="Sección"><Section /></Tool>
    <Tool aria-label="Líneas finas" $on><ThinLines /></Tool>
    <Divider />
    <Tool aria-label="Cerrar inactivas"><CloseHidden /></Tool>
    <Tool aria-label="Cambiar ventanas"><SwitchWin /></Tool>
    <DropArrow label="Lista de ventanas" />
    <Drop aria-label="Personalizar"><Customize /></Drop>
    <Title>Autodesk Revit 2021 - Proyecto1 - Tabla de planificación: SyS Protecciones colectivas y Medios auxiliares1</Title>
    <Drop aria-label="Ocultar búsqueda"><Icon w={4} h={8}><path d="M4 0v8L0 4z" fill="#333" stroke="none" /></Icon></Drop>
    <Tool aria-label="Buscar"><Binoculars /></Tool>
    <Account><UserIcon />MCalza</Account>
    <Gap $w={3} />
    <DropArrow label="Cuenta" />
    <Gap $w={3} />
    <Tool aria-label="Tienda"><Cart /></Tool>
    <Gap $w={2} />
    <Divider />
    <Gap $w={2} />
    <Tool aria-label="Ayuda"><Help /></Tool>
    <DropArrow label="Opciones de ayuda" />
    <Gap $w={54} />
    <Tool aria-label="Minimizar"><Icon w={10} h={12}><path d="M1 11h8" stroke="#222" strokeWidth="2" /></Icon></Tool>
    <Gap $w={1} />
    <Tool aria-label="Maximizar"><Icon w={12} h={11}><path d="M.5 1h11v9.500H.5z" stroke="#222" /><path d="M0 1h12" stroke="#222" strokeWidth="2" /></Icon></Tool>
    <Gap $w={1} />
    <Tool aria-label="Cerrar"><Cross s={11} /></Tool>
    <Gap $w={1} />
  </TitleBar>
);

const AppRibbon = () => (
  <Ribbon>
    <Panel title="Propiedades" w={76} cols="71px" pad={2}>
      <BigCmd $on><PropsBig />Propiedades</BigCmd>
    </Panel>
    <Panel title="Parámetros" w={288} cols="100px 60px 58px 68px" pad={1}>
      <ParamSelects>
        <SelectBox $arrow={2}><Select aria-label="Categoría"><option>Varias categ...</option></Select><Caret w={8} /></SelectBox>
        <SelectBox $arrow={2}><Select aria-label="Parámetro"><option>Familia</option></Select><Caret w={8} /></SelectBox>
      </ParamSelects>
      <BigCmd disabled><UnitFormat />{'Formato\nde unidad'}</BigCmd>
      <BigCmd><FormulaIcon />Calculado</BigCmd>
      <BigCmd><Combine />{'Combinar\nparámetros'}</BigCmd>
    </Panel>
    <Panel title="Columnas" w={226} cols="118px 1fr" pad={6}>
      <Stack>
        <Cmd><InsertCol />Insertar</Cmd>
        <Cmd><DeleteCol />Suprimir</Cmd>
        <Cmd><ResizeCol />Cambiar tamaño</Cmd>
      </Stack>
      <Stack>
        <Cmd><HideCol />Ocultar</Cmd>
        <Cmd><HideCol on />{'Mostrar  todo'}</Cmd>
      </Stack>
    </Panel>
    <Panel title="Filas" w={261} cols="139px 1fr" pad={5}>
      <Stack>
        <Cmd disabled><InsertRow />Insertar<Caret color="#777" /></Cmd>
        <Cmd disabled><InsertData />{'Insertar  fila de datos'}</Cmd>
        <Cmd disabled><DeleteRow />Suprimir</Cmd>
      </Stack>
      <Stack><Cmd disabled><ResizeRow />Cambiar tamaño</Cmd></Stack>
    </Panel>
    <Panel title="Títulos y encabezamientos" w={282} cols="120px 1fr" pad={6}>
      <Stack>
        <Cmd disabled><Merge />{'Fusionar  Separar'}</Cmd>
        <Cmd disabled><InsertImg />{'Insertar  imagen'}</Cmd>
        <Cmd disabled><ClearCell />{'Borrar  celda'}</Cmd>
      </Stack>
      <Stack>
        <Cmd disabled><GroupIcon />Grupo</Cmd>
        <Cmd disabled><GroupIcon x />Desagrupar</Cmd>
        <Cmd><Freeze />{'Inmovilizar  encabezado'}</Cmd>
      </Stack>
    </Panel>
    <Panel title="Aspecto" w={265} cols="91px 1fr" pad={5}>
      <Stack>
        <Cmd><Shading />Sombreado</Cmd>
        <Cmd><Borders />Bordes</Cmd>
        <Cmd><Reset />Restablecer</Cmd>
      </Stack>
      <Stack>
        <Cmd><FontIcon />Tipo de letra</Cmd>
        <Cmd><AlignH />{'Alinear  horizontalmente'}<Caret /></Cmd>
        <Cmd><AlignV />{'Alinear  verticalmente'}<Caret /></Cmd>
      </Stack>
    </Panel>
    <Panel title="Elemento" w={66}>
      <BigCmd disabled><Highlight />{'Resaltar\nen modelo'}</BigCmd>
    </Panel>
  </Ribbon>
);

const PropertiesPalette = () => (
  <Side>
    <Palette>
      <PaletteHead>
        <PaletteTitle>Propiedades</PaletteTitle>
        <button aria-label="Cerrar propiedades"><Cross /></button>
      </PaletteHead>
      <TypeCard>
        <Preview><TableBig /></Preview>
        <TypeName>{'Tabla de planificación\nSerie'}</TypeName>
        <Caret w={8} />
      </TypeCard>
      <FilterRow>
        <SelectBox $arrow={4}>
          <Select $look="type" aria-label="Filtro de propiedades"><option>Tabla de planificación: SyS Prote</option></Select>
          <Chevron />
        </SelectBox>
        <EditBtn><EditType />Editar tipo</EditBtn>
      </FilterRow>
      <PropsArea>
        <PropsTable>
          <colgroup><col style={{ width: 136 }} /><col style={{ width: 133 }} /><col /></colgroup>
          {GROUPS.map(g => (
            <tbody key={g.title}>
              <GroupRow><th colSpan={2} scope="rowgroup">{g.title}</th><td><DoubleUp /></td></GroupRow>
              {g.rows.map(r => (
                <PropRow key={r.name} $off={r.kind === 'off'}>
                  <th scope="row">{r.name}</th>
                  <td>{r.kind === 'button' ? <CellButton>{r.value}</CellButton> : r.value}</td>
                  <td />
                </PropRow>
              ))}
            </tbody>
          ))}
        </PropsTable>
      </PropsArea>
      <PaletteFoot>
        <Link href="#ayuda">Ayuda de propiedades</Link>
        <Apply disabled>Aplicar</Apply>
      </PaletteFoot>
    </Palette>
    <SideTabs>
      <SideTab $w={140}>Navegador de proyect...</SideTab>
      <SideTab $w={78} $on>Propiedades</SideTab>
    </SideTabs>
  </Side>
);

const Schedule = () => (
  <Sheet>
    <colgroup><col style={{ width: 318 }} /><col style={{ width: 96 }} /><col style={{ width: 96 }} /><col /></colgroup>
    <thead>
      <tr><SheetTitle colSpan={4}>{'<SyS Protecciones colectivas y Medios auxiliares1>'}</SheetTitle></tr>
      <LetterRow>{['A', 'B', 'C', 'D'].map(l => <th key={l}>{l}</th>)}</LetterRow>
      <HeadRow>{['Familia', 'Metros lineales', 'U_uds', 'Recuento'].map(l => <th key={l} scope="col">{l}</th>)}</HeadRow>
    </thead>
    {SCHEDULE.map((g, n) => (
      <tbody key={g.family}>
        <SheetRow $kind={n ? 'blank' : 'edge'}><td /><td /><td /><td /></SheetRow>
        {g.items.map((it, i) => (
          <SheetRow key={i} $kind={i ? 'next' : 'first'}><td>{g.family}</td>{it.map((v, j) => <td key={j}>{v}</td>)}</SheetRow>
        ))}
        <SheetRow $kind="total"><td>{g.family}: {g.count}</td><td>{g.total}</td><td>0</td><td /></SheetRow>
      </tbody>
    ))}
  </Sheet>
);

export default function App() {
  return (
    <Window>
      <GlobalStyle />
      <AppTitle />
      <TabBar>
        <Tab $kind="file" $w={59}>Archivo</Tab>
        {TABS.map(([name, w]) => <Tab key={name} $w={w}>{name}</Tab>)}
        <Tab $kind="active" $w={247}>Modificar tabla de planificación/cantidades</Tab>
        <Collapse aria-label="Minimizar cinta">
          <Icon w={15} h={9}><rect x=".5" y=".5" width="14" height="8" rx="2" fill="#eef2f8" /><path d="M5 6h5L7.500 3.500z" fill="#222" stroke="none" /></Icon>
          <Caret color="#000" />
        </Collapse>
      </TabBar>
      <AppRibbon />
      <Main>
        <PropertiesPalette />
        <Doc>
          <DocTabs>
            <DocTab><PlanTab />Nivel 2</DocTab>
            <DocTab $on><TableTab />SyS Protecciones colectivas y Me...<Cross /></DocTab>
            <DocMenu aria-label="Lista de vistas"><Customize /></DocMenu>
          </DocTabs>
          <Canvas><Schedule /></Canvas>
        </Doc>
      </Main>
      <OptionsBar>Modificar tabla de planificación/cantidades</OptionsBar>
      <StatusBar>
        <StatusText>Amplíe o reduzca la vista con la tecla Ctrl + rueda del ratón o Ctrl + [+/-]. Para restab</StatusText>
        <Gap $w={2} />
        <StatusTool aria-label="Subproyectos"><Worksets /></StatusTool>
        <Gap $w={3} />
        <StatusSelect $arrow={2}><Select $look="status" aria-label="Subproyecto activo" disabled><option></option></Select><Chevron color="#999" /></StatusSelect>
        <Gap $w={4} />
        <StatusTool aria-label="Solicitudes de edición"><Requests /></StatusTool>
        <span>:0</span>
        <Gap $w={18} />
        <StatusTool aria-label="Opciones de diseño"><OptionsIcon /></StatusTool>
        <StatusTool aria-label="Añadir al conjunto"><AddSet /></StatusTool>
        <Gap $w={3} />
        <StatusSelect $arrow={2}><Select $look="status" aria-label="Opción de diseño" disabled><option>Modelo base</option></Select><Chevron color="#999" /></StatusSelect>
        <Spring />
        <StatusTool aria-label="Seleccionar vínculos"><SelLinks /></StatusTool>
        <StatusTool aria-label="Seleccionar elementos subyacentes"><SelUnder /></StatusTool>
        <StatusTool aria-label="Seleccionar elementos fijados"><SelPinned /></StatusTool>
        <StatusTool aria-label="Seleccionar por cara"><SelFace /></StatusTool>
        <StatusTool aria-label="Arrastrar al seleccionar"><DragSel /></StatusTool>
        <StatusTool aria-label="Procesos en segundo plano"><Spinner /></StatusTool>
        <FilterCount><Funnel />:0</FilterCount>
        <Zoom>100%</Zoom>
        <Gap $w={18} />
      </StatusBar>
    </Window>
  );
}
